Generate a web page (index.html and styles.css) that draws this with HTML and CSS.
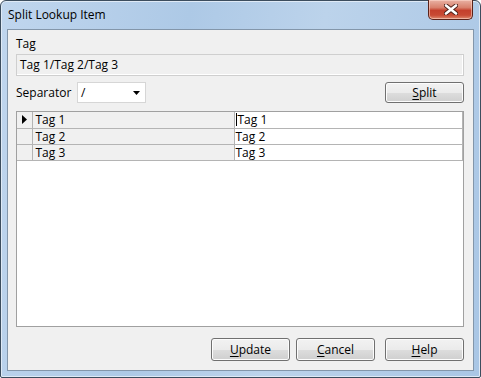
FILE: index.html
```html
<!DOCTYPE html>
<html lang="en">
<head>
  <meta charset="UTF-8" />
  <title>Split Lookup Item</title>
  <link rel="stylesheet" href="styles.css">
</head>
<body>
  <div class="window">
    <div class="titlebar">
      <span class="title">Split Lookup Item</span>
      <button class="close-btn" aria-label="Close">
        <svg width="14" height="11" viewBox="0 0 14 11">
          <path d="M2 1.5 L12 9.5 M12 1.5 L2 9.5" stroke="#4a1e17" stroke-width="4.4" stroke-linecap="round" />
          <path d="M2 1.5 L12 9.5 M12 1.5 L2 9.5" stroke="#ffffff" stroke-width="2.6" stroke-linecap="round" />
        </svg>
      </button>
    </div>

    <div class="client">
      <div class="field-label">Tag</div>
      <div class="tag-box">Tag 1/Tag 2/Tag 3</div>

      <div class="sep-row">
        <span class="sep-label">Separator</span>
        <div class="combo">
          <span>/</span>
          <svg class="combo-arrow" width="7" height="4" viewBox="0 0 7 4"><path d="M0 0 H7 L3.5 4 Z" fill="#000" /></svg>
        </div>
        <button class="btn btn-split"><u>S</u>plit</button>
      </div>

      <div class="grid">
        <table>
          <tr>
            <td class="row-head"><svg width="5" height="9" viewBox="0 0 5 9"><path d="M0 0 L5 4.5 L0 9 Z" fill="#000" /></svg></td>
            <td class="cell-ro">Tag 1</td>
            <td class="cell-edit"><span class="caret"></span>Tag 1</td>
          </tr>
          <tr>
            <td class="row-head"></td>
            <td class="cell-ro">Tag 2</td>
            <td class="cell-edit">Tag 2</td>
          </tr>
          <tr>
            <td class="row-head"></td>
            <td class="cell-ro">Tag 3</td>
            <td class="cell-edit">Tag 3</td>
          </tr>
        </table>
      </div>

      <div class="actions">
        <button class="btn btn-update"><u>U</u>pdate</button>
        <button class="btn btn-cancel"><u>C</u>ancel</button>
        <button class="btn btn-help"><u>H</u>elp</button>
      </div>
    </div>
  </div>
</body>
</html>
```

FILE: styles.css
```css
* {
  box-sizing: border-box;
}

body {
  margin: 0;
  font-family: 'Open Sans', 'Noto Sans', sans-serif;
  font-size: 12px;
  color: #000;
  background-color: #ffffff;
}

.window {
  width: 481px;
  height: 378px;
  border: 1px solid #3c4d5e;
  border-radius: 6px 6px 2px 2px;
  padding: 0 6px 6px 6px;
  display: flex;
  flex-direction: column;
  background: linear-gradient(100deg, #c0d6ee 0%, #adc9e6 35%, #bcd3eb 60%, #a9c6e5 100%);
  box-shadow: inset 0 0 0 1px #dfeaf6;
}

.titlebar {
  height: 28px;
  display: flex;
  justify-content: space-between;
  align-items: flex-start;
  padding: 0 1px 0 1px;
}

.title {
  padding-top: 6px;
  line-height: 16px;
  color: #000;
}

.close-btn {
  width: 45px;
  height: 20px;
  margin-top: -1px;
  border: 1px solid #5a2219;
  border-top: none;
  border-radius: 0 0 5px 5px;
  background: linear-gradient(180deg, #e9b2a4 0%, #d8806c 40%, #c4402c 55%, #c84a34 80%, #de8a6e 100%);
  box-shadow: inset 0 0 0 1px rgba(255, 220, 210, 0.55);
  padding: 0;
  display: flex;
  align-items: center;
  justify-content: center;
}

.client {
  flex-grow: 1;
  border: 1px solid #8396aa;
  background-color: #f0f0f0;
  padding: 6px 9px 0 8px;
  display: flex;
  flex-direction: column;
}

.field-label {
  line-height: 16px;
}

.tag-box {
  margin-top: 2px;
  height: 22px;
  border: 1px solid #cfcfcf;
  box-shadow: inset -1px -1px 0 #ffffff;
  padding: 0 3px;
  line-height: 20px;
  background-color: #f0f0f0;
}

.sep-row {
  margin-top: 6px;
  height: 21px;
  display: flex;
  align-items: center;
}

.sep-label {
  width: 61px;
}

.combo {
  width: 69px;
  height: 21px;
  border: 1px solid #d6d6d6;
  background-color: #ffffff;
  display: flex;
  align-items: center;
  justify-content: space-between;
  padding: 0 5px 0 3px;
}

.btn {
  font-family: inherit;
  font-size: 12px;
  color: #000;
  border: 1px solid #707070;
  border-radius: 3px;
  background: linear-gradient(180deg, #f2f2f2 0%, #ebebeb 50%, #dddddd 51%, #cfcfcf 100%);
  box-shadow: inset 0 0 0 1px #fcfcfc;
  padding: 0;
  cursor: pointer;
}

.btn u {
  text-underline-offset: 2px;
}

.btn-split {
  margin-left: auto;
  width: 79px;
  height: 21px;
}

.grid {
  margin-top: 8px;
  height: 216px;
  border: 1px solid #a0a0a0;
  background-color: #ffffff;
  padding-right: 1px;
}

.grid table {
  border-collapse: collapse;
  table-layout: fixed;
  width: 446px;
}

.grid td {
  height: 16px;
  padding: 0 0 0 3px;
  border-right: 1px solid #b4b4b4;
  border-bottom: 1px solid #b4b4b4;
  line-height: 15px;
  white-space: nowrap;
}

.grid .row-head {
  width: 15px;
  background-color: #f0f0f0;
  padding: 0 0 0 5px;
}

.grid .row-head svg {
  display: block;
}

.grid .cell-ro {
  width: 202px;
  background-color: #f0f0f0;
}

.grid .cell-edit {
  padding-left: 1px;
}

.caret {
  display: inline-block;
  width: 1px;
  height: 13px;
  background-color: #000;
  vertical-align: -2px;
  margin-right: 1px;
}

.actions {
  margin-top: 11px;
  display: flex;
  justify-content: flex-end;
}

.actions .btn {
  width: 79px;
  height: 23px;
}

.btn-cancel {
  margin-left: 6px;
}

.btn-help {
  margin-left: 10px;
}
```
